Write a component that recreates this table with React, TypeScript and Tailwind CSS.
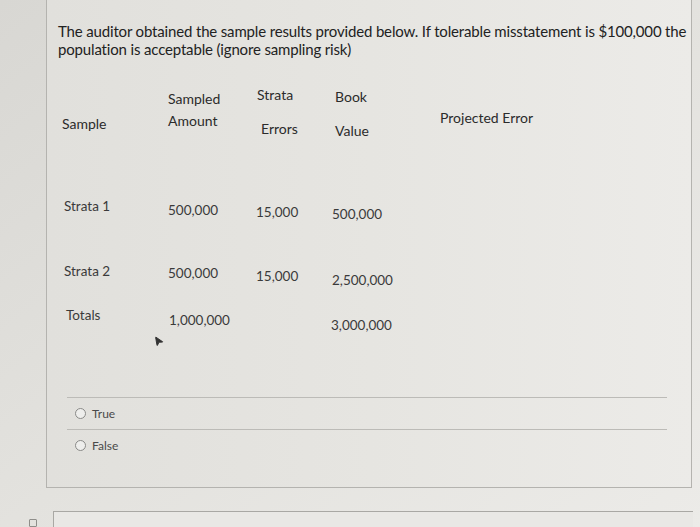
import { MousePointer2 } from "lucide-react";

const headTop = "text-[14px] leading-[20px] text-[#2b2b2b]";
const cell = "text-[13.5px] leading-[18px] text-[#3a3a3a]";

const rows = [
  { label: "Strata 1", amount: "500,000", errors: "15,000", book: "500,000", off: [0, 4, 6, 8] },
  { label: "Strata 2", amount: "500,000", errors: "15,000", book: "2,500,000", off: [0, 2, 5, 9] },
];

export default function App() {
  return (
    <div
      className="w-[700px] h-[527px] overflow-hidden bg-gradient-to-br from-[#d8d7d3] via-[#e3e2de] to-[#ecebe8]"
      style={{ fontFamily: "Lato, 'Open Sans', sans-serif" }}
    >
      <div className="ml-[46px] w-[646px] h-[488px] border-l border-r border-b border-[#b4b3af] bg-gradient-to-r from-[#e1e0dc] via-[#e6e5e1] to-[#ecebe8] pl-[11px] pt-[22px]">
        <p className="text-[15px] leading-[18px] text-[#222] w-[634px] tracking-[-0.16px]">
          The auditor obtained the sample results provided below. If tolerable misstatement is $100,000 the population is acceptable (ignore sampling risk)
        </p>

        {/* table header */}
        <div className="flex mt-[25px] h-[64px]">
          <div className={`w-[110px] pl-[4px] mt-[31px] ${headTop}`}>Sample</div>
          <div className={`w-[89px] mt-[6px] ${headTop} flex flex-col gap-[2px]`}>
            <span>Sampled</span>
            <span>Amount</span>
          </div>
          <div className={`w-[78px] mt-[2px] ${headTop} flex flex-col gap-[14px]`}>
            <span>Strata</span>
            <span className="pl-[4px]">Errors</span>
          </div>
          <div className={`w-[105px] mt-[4px] ${headTop} flex flex-col gap-[14px]`}>
            <span>Book</span>
            <span>Value</span>
          </div>
          <div className={`mt-[25px] ${headTop}`}>Projected Error</div>
        </div>

        {/* data rows */}
        <div className="flex flex-col mt-[50px] gap-[45px]">
          {rows.map((r) => (
            <div key={r.label} className="flex h-[20px]">
              <div className={`w-[110px] pl-[6px] ${cell}`} style={{ marginTop: r.off[0] }}>{r.label}</div>
              <div className={`w-[88px] ${cell}`} style={{ marginTop: r.off[1] }}>{r.amount}</div>
              <div className={`w-[76px] ${cell}`} style={{ marginTop: r.off[2] }}>{r.errors}</div>
              <div className={`${cell}`} style={{ marginTop: r.off[3] }}>{r.book}</div>
            </div>
          ))}
          <div className="flex h-[20px] -mt-[21px]">
            <div className={`w-[110px] pl-[8px] ${cell}`}>Totals</div>
            <div className={`w-[163px] pl-[1px] mt-[5px] ${cell} relative`}>
              1,000,000
              <MousePointer2 className="absolute left-[-15px] top-[25px] w-[11px] h-[11px] text-[#333] fill-[#333] rotate-[12deg]" />
            </div>
            <div className={`mt-[10px] ${cell}`}>3,000,000</div>
          </div>
        </div>

        {/* options */}
        <div className="mt-[71px] ml-[9px] w-[600px]">
          <div className="border-t border-[#bcbbb7] h-[32px] flex items-center gap-[6px] pl-[8px]">
            <span className="w-[11px] h-[11px] rounded-full border border-[#8a8a88] bg-[#eeeeec]" />
            <span className="text-[12px] text-[#4a4a4a]">True</span>
          </div>
          <div className="border-t border-[#bcbbb7] h-[32px] flex items-center gap-[6px] pl-[8px]">
            <span className="w-[11px] h-[11px] rounded-full border border-[#8a8a88] bg-[#eeeeec]" />
            <span className="text-[12px] text-[#4a4a4a]">False</span>
          </div>
        </div>
      </div>

      {/* next question box (partial) */}
      <div className="flex items-start mt-[23px]">
        <div className="ml-[29px] mt-[8px] w-[8px] h-[8px] border border-[#8f8e8a] rounded-[1px]" />
        <div className="ml-[16px] w-[640px] h-[40px] border-t border-l border-[#a9a8a4] bg-[#e9e8e5]" />
      </div>
    </div>
  );
}
